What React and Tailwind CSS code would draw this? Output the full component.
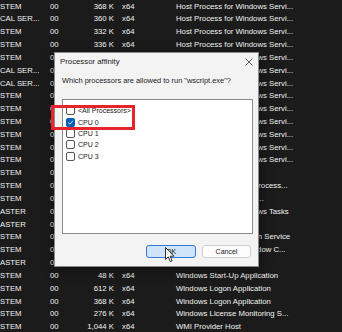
import React from "react";

const H = "Host Process for Windows Servi...";
const rows = [
  { n: "STEM", p: "00", m: "368 K", a: "x64", d: H },
  { n: "CAL SER...", p: "00", m: "360 K", a: "x64", d: H },
  { n: "STEM", p: "00", m: "332 K", a: "x64", d: H },
  { n: "STEM", p: "00", m: "336 K", a: "x64", d: H },
  { n: "STEM", p: "00", m: "1,204 K", a: "x64", d: H },
  { n: "CAL SER...", p: "00", m: "1,652 K", a: "x64", d: H },
  { n: "CAL SER...", p: "00", m: "2,108 K", a: "x64", d: H },
  { n: "STEM", p: "00", m: "1,380 K", a: "x64", d: H },
  { n: "STEM", p: "00", m: "940 K", a: "x64", d: H },
  { n: "STEM", p: "00", m: "1,016 K", a: "x64", d: H },
  { n: "STEM", p: "00", m: "712 K", a: "x64", d: H },
  { n: "STEM", p: "00", m: "1,828 K", a: "x64", d: H },
  { n: "STEM", p: "00", m: "2,004 K", a: "x64", d: H },
  { n: "STEM", p: "00", m: "548 K", a: "x64", d: "Console Window Host" },
  { n: "STEM", p: "00", m: "1,092 K", a: "x64", d: "Client Server Runtime process..." },
  { n: "STEM", p: "00", m: "824 K", a: "x64", d: "Windows Drivers and in..." },
  { n: "ASTER", p: "00", m: "2,316 K", a: "x64", d: "Host Process for Windows Tasks" },
  { n: "ASTER", p: "00", m: "1,440 K", a: "x64", d: "Runtime Broker" },
  { n: "STEM", p: "00", m: "1,268 K", a: "x64", d: "Windows Security Health Service" },
  { n: "STEM", p: "00", m: "1,736 K", a: "x64", d: "Microsoft® Volume Shadow C..." },
  { n: "ASTER", p: "00", m: "2,880 K", a: "x64", d: "Runtime Broker" },
  { n: "STEM", p: "00", m: "48 K", a: "x64", d: "Windows Start-Up Application" },
  { n: "STEM", p: "00", m: "612 K", a: "x64", d: "Windows Logon Application" },
  { n: "STEM", p: "00", m: "368 K", a: "x64", d: "Windows Logon Application" },
  { n: "STEM", p: "00", m: "276 K", a: "x64", d: "Windows License Monitoring S..." },
  { n: "STEM", p: "00", m: "1,044 K", a: "x64", d: "WMI Provider Host" },
];

function Box({ checked }) {
  if (checked) {
    return (
      <div className="w-[9px] h-[9px] shrink-0 rounded-[2px] bg-[#005fb8] flex items-center justify-center">
        <svg width="7" height="7" viewBox="0 0 7 7">
          <path d="M1.2 3.6 L2.8 5.1 L5.9 1.8" fill="none" stroke="#ffffff" strokeWidth="0.9" />
        </svg>
      </div>
    );
  }
  return <div className="w-[9px] h-[9px] shrink-0 rounded-[2px] border border-[#555555] bg-white" />;
}

export default function App() {
  const items = [
    { l: "<All Processors>", c: false },
    { l: "CPU 0", c: true },
    { l: "CPU 1", c: false },
    { l: "CPU 2", c: false },
    { l: "CPU 3", c: false },
  ];
  return (
    <div className="relative w-[342px] h-[332px] overflow-hidden bg-[#1b1b1b] text-[#f2f2f2] font-['Liberation_Sans',Arial,sans-serif]">
      <div className="flex flex-col">
        {rows.map((r, i) => (
          <div key={i} className="flex h-[12.83px] items-center text-[7.75px] leading-none whitespace-nowrap">
            <div className="w-[51px] shrink-0 overflow-hidden -ml-[1px] pl-[1px]">{r.n}</div>
            <div className="w-[24px] shrink-0">{r.p}</div>
            <div className="w-[40px] shrink-0 text-right">{r.m}</div>
            <div className="w-[62px] shrink-0 pl-[8px]">{r.a}</div>
            <div className="shrink-0">{r.d}</div>
          </div>
        ))}
      </div>

      {/* Dialog */}
      <div className="absolute left-[54px] top-[52px] w-[205px] h-[215px] flex flex-col bg-[#f3f3f3] border border-[#8c8c8c] shadow-[0_2px_10px_rgba(0,0,0,0.5)] text-[#1a1a1a]">
        <div className="h-[18px] flex items-center justify-between pl-[5px] pr-[5px]">
          <span className="text-[7.8px] leading-none">Processor affinity</span>
          <svg width="8" height="8" viewBox="0 0 8 8">
            <path d="M0.5 0.5 L7.5 7.5 M7.5 0.5 L0.5 7.5" stroke="#333333" strokeWidth="0.8" />
          </svg>
        </div>
        <div className="h-[20px] flex items-center pl-[7px] text-[7.45px] leading-none">
          Which processors are allowed to run "wscript.exe"?
        </div>
        <div className="mt-[8px] ml-[7px] w-[191px] h-[135px] bg-white border border-[#8a8a8a] pt-[5px] pl-[3px] flex flex-col">
          {items.map((it, i) => (
            <div key={i} className="h-[11.4px] flex items-center gap-[3px] text-[7px] leading-none text-[#1a1a1a]">
              <Box checked={it.c} />
              <span>{it.l}</span>
            </div>
          ))}
        </div>
        <div className="mt-[11px] flex justify-end gap-[6px] pr-[7px]">
          <div className="w-[50px] h-[13px] rounded-[3px] bg-[#cfe4f8] border border-[#2f7bd6] flex items-center justify-center text-[7px] leading-none">
            OK
          </div>
          <div className="w-[49px] h-[13px] rounded-[3px] bg-[#fdfdfd] border border-[#cfcfcf] flex items-center justify-center text-[7px] leading-none">
            Cancel
          </div>
        </div>
      </div>

      {/* Red annotation box */}
      <div className="absolute left-[51px] top-[105px] w-[84px] h-[25px] border-[3px] border-[#e5252b]" />

      {/* Mouse cursor */}
      <svg className="absolute left-[165px] top-[247px]" width="10" height="16" viewBox="0 0 10 16">
        <path d="M0.5 0.5 L0.5 12.5 L3.3 9.9 L5.2 14.6 L7.1 13.8 L5.2 9.2 L8.9 9.2 Z" fill="#ffffff" stroke="#000000" strokeWidth="0.8" strokeLinejoin="round" />
      </svg>
    </div>
  );
}
